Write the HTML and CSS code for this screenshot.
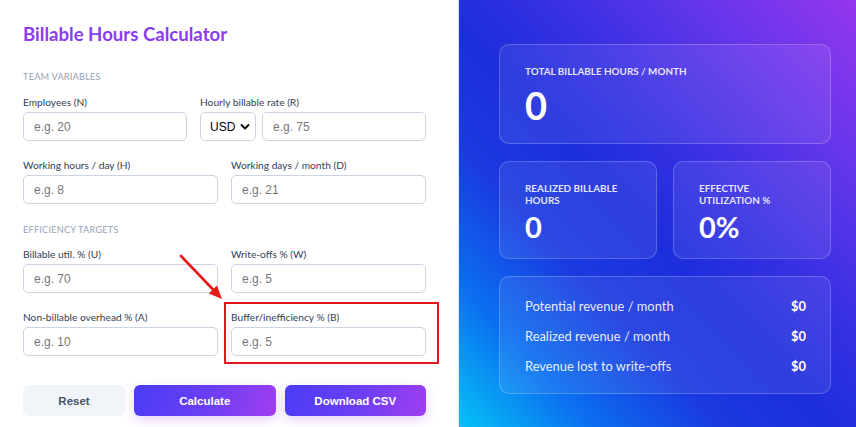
FILE: index.html
```html
<!DOCTYPE html>
<html lang="en">
<head>
<meta charset="utf-8">
<title>Billable Hours Calculator</title>
<link rel="stylesheet" href="styles.css">
</head>
<body>
<div class="page">
  <section class="form-panel">
    <h1 class="title">Billable Hours Calculator</h1>

    <div class="section-title">Team variables</div>
    <div class="rows">
      <div class="grid grid-rate">
        <div class="field">
          <label class="label">Employees (N)</label>
          <input class="input" type="text" placeholder="e.g. 20">
        </div>
        <div class="field">
          <label class="label">Hourly billable rate (R)</label>
          <div class="rate-row">
            <div class="select-wrap">
              <select class="select"><option>USD</option></select>
              <svg class="chev" width="10" height="8" viewBox="0 0 10 8"><path d="M1.5 2 L5 5.5 L8.5 2" fill="none" stroke="#111" stroke-width="2" stroke-linecap="round" stroke-linejoin="round"/></svg>
            </div>
            <input class="input" type="text" placeholder="e.g. 75">
          </div>
        </div>
      </div>
      <div class="grid">
        <div class="field">
          <label class="label">Working hours / day (H)</label>
          <input class="input" type="text" placeholder="e.g. 8">
        </div>
        <div class="field">
          <label class="label">Working days / month (D)</label>
          <input class="input" type="text" placeholder="e.g. 21">
        </div>
      </div>
    </div>

    <div class="section-title section-second">Efficiency targets</div>
    <div class="rows rows-second">
      <div class="grid">
        <div class="field">
          <label class="label">Billable util. % (U)</label>
          <input class="input" type="text" placeholder="e.g. 70">
        </div>
        <div class="field">
          <label class="label">Write-offs % (W)</label>
          <input class="input" type="text" placeholder="e.g. 5">
        </div>
      </div>
      <div class="grid">
        <div class="field">
          <label class="label">Non-billable overhead % (A)</label>
          <input class="input" type="text" placeholder="e.g. 10">
        </div>
        <div class="field field-marked">
          <label class="label">Buffer/inefficiency % (B)</label>
          <input class="input" type="text" placeholder="e.g. 5">
          <div class="highlight"></div>
          <svg class="arrow" width="50" height="52" viewBox="0 0 50 52">
            <line x1="5" y1="5" x2="38" y2="39.5" stroke="#e41b1b" stroke-width="2.6" stroke-linecap="round"/>
            <polygon points="46,48 32.8,42.6 40.9,34.6" fill="#e41b1b"/>
          </svg>
        </div>
      </div>
    </div>

    <div class="actions">
      <button class="btn btn-reset">Reset</button>
      <button class="btn btn-primary">Calculate</button>
      <button class="btn btn-primary">Download CSV</button>
    </div>
  </section>

  <section class="result-panel">
    <div class="card card-big">
      <div class="card-label">Total billable hours / month</div>
      <div class="card-value big">0</div>
    </div>
    <div class="card-pair">
      <div class="card card-small">
        <div class="card-label">Realized billable hours</div>
        <div class="card-value small">0</div>
      </div>
      <div class="card card-small">
        <div class="card-label">Effective utilization %</div>
        <div class="card-value small">0%</div>
      </div>
    </div>
    <div class="card card-list">
      <div class="row"><span>Potential revenue / month</span><strong>$0</strong></div>
      <div class="row"><span>Realized revenue / month</span><strong>$0</strong></div>
      <div class="row"><span>Revenue lost to write-offs</span><strong>$0</strong></div>
    </div>
  </section>
</div>
</body>
</html>
```

FILE: styles.css
```css
* { box-sizing: border-box; }
html, body { margin: 0; padding: 0; height: 100%; overflow: hidden; }
body {
  font-family: "Lato", "Noto Sans", sans-serif;
  color: #334155;
  background: #fff;
}
.page {
  display: flex;
  height: 427px;
}
.form-panel {
  width: 459px;
  flex: none;
  padding: 22px 32px 0 23px;
  border-right: 1px solid #dbeafe;
  background: #fff;
}
.title {
  margin: 0;
  font-size: 18.6px;
  line-height: 24px;
  font-weight: 700;
  color: #8a3dee;
}
.section-title {
  margin-top: 25px;
  font-size: 9.2px;
  line-height: 12px;
  font-weight: 400;
  letter-spacing: 0.2px;
  text-transform: uppercase;
  color: #94a3b8;
}
.section-second { margin-top: 20px; }
.rows {
  margin-top: 12px;
  display: flex;
  flex-direction: column;
  gap: 17px;
}
.rows-second { margin-top: 11px; }
.grid {
  display: grid;
  grid-template-columns: 1fr 1fr;
  column-gap: 13px;
}
.grid-rate { grid-template-columns: 164px 1fr; }
.field { display: flex; flex-direction: column; position: relative; }
.label {
  font-size: 10.2px;
  line-height: 14px;
  color: #334155;
  margin-bottom: 3px;
}
.input {
  height: 29px;
  width: 100%;
  border: 1px solid #cbd5e1;
  border-radius: 5px;
  padding: 0 10px;
  font-family: "Liberation Sans", Arial, sans-serif;
  font-size: 12px;
  color: #111;
  background: #fff;
  outline: none;
}
.input::placeholder { color: #777; }
.rate-row { display: flex; gap: 6px; }
.select-wrap { position: relative; flex: none; width: 56px; }
.select {
  appearance: none;
  -webkit-appearance: none;
  width: 56px;
  height: 29px;
  border: 1px solid #cbd5e1;
  border-radius: 5px;
  padding: 0 0 0 9px;
  font-family: "Liberation Sans", Arial, sans-serif;
  font-size: 12px;
  color: #000;
  background: #fff;
}
.chev { position: absolute; right: 6px; top: 11px; pointer-events: none; }
.highlight {
  position: absolute;
  top: -8px;
  left: -7px;
  right: -13px;
  bottom: -8px;
  border: 2px solid #e3141b;
  pointer-events: none;
}
.arrow {
  position: absolute;
  left: -55px;
  top: -59px;
}
.actions {
  margin-top: 29px;
  display: grid;
  grid-template-columns: 102px 1fr 1fr;
  gap: 9px;
}
.btn {
  height: 31px;
  border: none;
  border-radius: 6px;
  font-family: "Liberation Sans", Arial, sans-serif;
  font-size: 11.5px;
  font-weight: 700;
}
.btn-reset { background: #f1f5f9; color: #475569; }
.btn-primary {
  color: #fff;
  background: linear-gradient(110deg, #4a3cf6 0%, #6d3ff3 55%, #a23df0 100%);
  box-shadow: 0 4px 12px rgba(147, 51, 234, 0.22);
}

.result-panel {
  flex: 1;
  padding: 44px 25px 0 40px;
  display: flex;
  flex-direction: column;
  gap: 17px;
  color: #fff;
  background: linear-gradient(to top right, #06c2f6 0%, #0b6ef0 17%, #1a3ae0 33%, #1d2edc 47%, #3430e2 60%, #6536eb 80%, #9536ee 100%);
}
.card {
  background: rgba(255, 255, 255, 0.08);
  border: 1px solid rgba(255, 255, 255, 0.2);
  border-radius: 10px;
}
.card-big { padding: 20px 25px 19px; }
.card-label {
  font-size: 9.9px;
  line-height: 12px;
  font-weight: 700;
  text-transform: uppercase;
  color: rgba(255, 255, 255, 0.88);
}
.card-value { font-weight: 700; line-height: 1; color: #fff; }
.card-value.big { font-size: 38px; margin-top: 9px; }
.card-pair {
  display: grid;
  grid-template-columns: 1fr 1fr;
  gap: 16px;
}
.card-small { padding: 20px 25px 17px; }
.card-value.small { font-size: 29px; margin-top: 6px; }
.card-list {
  padding: 20px 24px 18px 25px;
  display: flex;
  flex-direction: column;
  gap: 12px;
}
.row {
  display: flex;
  justify-content: space-between;
  font-size: 12.9px;
  line-height: 18px;
  color: rgba(255, 255, 255, 0.9);
}
.row strong { font-weight: 700; color: #fff; }
```
